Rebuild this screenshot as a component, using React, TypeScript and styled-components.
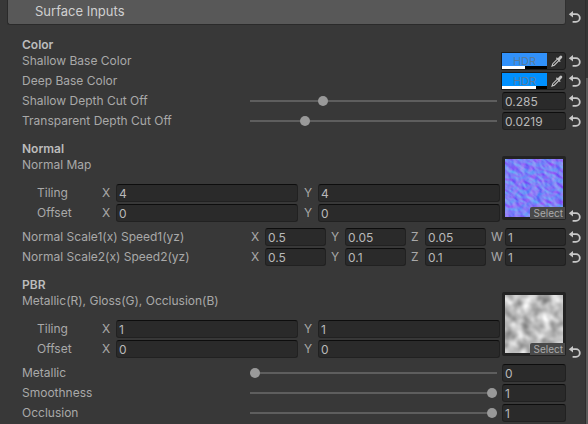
import React, { useId } from "react";
import styled, { createGlobalStyle } from "styled-components";

const GlobalStyle = createGlobalStyle`
  * { box-sizing: border-box; }
  body {
    margin: 0;
    background: #383838;
    color: #a9a9a9;
    font: 400 12px/16px Inter, "Liberation Sans", sans-serif;
    overflow: hidden;
  }
  button, input { font: inherit; color: inherit; margin: 0; }
`;

const Inspector = styled.main`
  display: flex;
  min-height: 100vh;
  background: #383838;
`;

const Content = styled.div`
  flex: 1;
  min-width: 0;
  padding: 0 2px 2px 7px;
`;

const ScrollTrack = styled.div`
  width: 3px;
  border-left: 1px solid #2e2e2e;
  background: linear-gradient(#353535 78px, #5a5a5a 78px);
`;

const HeaderRow = styled.header`
  display: flex;
  align-items: flex-end;
`;

const Foldout = styled.button`
  flex: 1;
  height: 25px;
  padding: 0 27px 2px;
  border: 1px solid #2a2a2a;
  border-top: 0;
  border-right-color: #303030;
  border-radius: 0 0 3px 3px;
  background: #585858;
  color: #d0d0d0;
  font-size: 13px;
  text-align: left;
`;

const Section = styled.section`
  padding: 11px 0 0 15px;
  & + & { padding-top: 10px; }
`;

const Heading = styled.h2`
  margin: 0;
  height: 16px;
  padding-top: 1px;
  font-size: 12px;
  line-height: 16px;
  font-weight: 600;
  color: #bcbcbc;
`;

const Rows = styled.div<{ $spaced?: boolean }>`
  display: grid;
  gap: 2px;
  margin-top: ${(p) => (p.$spaced ? 6 : 0)}px;
`;

const Row = styled.div`
  display: grid;
  grid-template-columns: 228px minmax(0, 1fr) 17px;
  height: 18px;
  align-items: center;
`;

const Label = styled.label`
  white-space: nowrap;
  line-height: 18px;
`;

const Controls = styled.div`
  display: flex;
  justify-content: flex-end;
  align-items: center;
  gap: 5px;
`;

const TextField = styled.input`
  flex: 1;
  min-width: 0;
  width: 100%;
  height: 18px;
  padding: 0 2px;
  border: 1px solid #212121;
  border-top-color: #0d0d0d;
  border-radius: 3px;
  background: #2a2a2a;
  color: #b9b9b9;
  outline: none;
`;

const ValueField = styled(TextField)`
  flex: 0 0 64px;
`;

const Slider = styled.input`
  appearance: none;
  flex: 1;
  min-width: 0;
  height: 10px;
  background: linear-gradient(#5e5e5e, #5e5e5e) center / 100% 2px no-repeat;
  &::-webkit-slider-thumb {
    appearance: none;
    width: 10px;
    height: 10px;
    border-radius: 50%;
    background: #999;
  }
`;

const ResetButton = styled.button`
  display: flex;
  justify-content: center;
  align-items: center;
  width: 17px;
  height: 16px;
  padding: 0;
  border: 0;
  background: none;
  color: #c8c8c8;
`;

const ColorField = styled.div`
  display: flex;
  width: 65px;
  height: 18px;
  border: 1px solid #1c1c1c;
  border-radius: 0 3px 3px 0;
  background: #2c2c2c;
`;

const Swatch = styled.button<{ $color: string; $alpha: number }>`
  width: 45px;
  height: 16px;
  padding: 0;
  border: 0;
  background:
    linear-gradient(90deg, #fff ${(p) => p.$alpha}%, #000 ${(p) => p.$alpha}%) bottom / 100% 3px no-repeat,
    ${(p) => p.$color};
  color: #567c9e;
  font-size: 11px;
  line-height: 16px;
`;

const PickerButton = styled.button`
  display: flex;
  flex: 1;
  align-items: center;
  justify-content: center;
  padding: 0 0 0 2px;
  border: 0;
  background: none;
  color: #c4c4c4;
`;

const Vector = styled.div<{ $count: number }>`
  display: grid;
  flex: 1;
  grid-template-columns: repeat(${(p) => p.$count}, minmax(0, 1fr));
  gap: ${(p) => (p.$count === 2 ? 5 : 4)}px;
`;

const Axis = styled.label`
  display: flex;
  align-items: center;
`;

const AxisName = styled.span`
  width: 15px;
  padding-left: 1px;
  flex: none;
`;

const TextureRow = styled.div`
  display: grid;
  grid-template-columns: minmax(0, 1fr) 64px 17px;
`;

const TextureSettings = styled.div`
  display: grid;
  gap: 2px;
  padding-right: 2px;
`;

const TextureName = styled.div`
  height: 18px;
  line-height: 18px;
  margin-bottom: 8px;
`;

const TextureVector = styled.div`
  display: grid;
  grid-template-columns: 64px minmax(0, 1fr);
  padding-left: 15px;
  height: 18px;
  align-items: center;
`;

const Thumbnail = styled.div`
  position: relative;
  height: 64px;
  padding: 3px;
  border-radius: 2px;
  background: #232323;
  svg { display: block; width: 100%; }
`;

const SelectButton = styled.button`
  position: absolute;
  right: 1px;
  bottom: 1px;
  height: 12px;
  padding: 0 2px 0 4px;
  border: 0;
  border-radius: 2px 0 0 0;
  background: #494949;
  color: #a9a9a9;
  font-size: 10px;
  line-height: 12px;
`;

const TextureReset = styled.div`
  align-self: end;
  height: 14px;
`;

function Reset({ label }: { label: string }) {
  return (
    <ResetButton aria-label={`Reset ${label}`}>
      <svg width="13" height="12" viewBox="0 0 13 12" fill="none">
        <path d="M3 3.2H8a3.8 3.8 0 0 1 0 7.6H4.6" stroke="currentColor" strokeWidth="1.8" />
        <path d="M.8 3.2 5 0v6.4z" fill="currentColor" />
      </svg>
    </ResetButton>
  );
}

function Dropper() {
  return (
    <svg width="12" height="12" viewBox="0 0 12 12" fill="none">
      <path d="M6.6 3.9 1.8 8.7 1 11l2.3-.8 4.8-4.8" stroke="currentColor" strokeWidth="1.1" />
      <path d="M5.4 2.8 9.2 6.6" stroke="currentColor" strokeWidth="1.3" />
      <path d="M7.8 4.2 9.9 2.1" stroke="currentColor" strokeWidth="2.8" strokeLinecap="round" />
    </svg>
  );
}

function ColorRow({ label, color, alpha }: { label: string; color: string; alpha: number }) {
  const id = useId();
  return (
    <Row>
      <Label htmlFor={id}>{label}</Label>
      <Controls>
        <ColorField>
          <Swatch id={id} $color={color} $alpha={alpha}>HDR</Swatch>
          <PickerButton aria-label={`Pick ${label}`}><Dropper /></PickerButton>
        </ColorField>
      </Controls>
      <Reset label={label} />
    </Row>
  );
}

function SliderRow({ label, value, position, reset }: { label: string; value: string; position: number; reset?: boolean }) {
  const id = useId();
  return (
    <Row>
      <Label htmlFor={id}>{label}</Label>
      <Controls>
        <Slider id={id} type="range" min={0} max={1} step={0.001} defaultValue={position} />
        <ValueField aria-label={`${label} value`} defaultValue={value} />
      </Controls>
      {reset && <Reset label={label} />}
    </Row>
  );
}

function VectorInput({ name, values }: { name: string; values: string[] }) {
  return (
    <Vector $count={values.length} role="group" aria-label={name}>
      {values.map((value, i) => (
        <Axis key={i}>
          <AxisName>{"XYZW"[i]}</AxisName>
          <TextField defaultValue={value} />
        </Axis>
      ))}
    </Vector>
  );
}

function VectorRow({ label, values }: { label: string; values: string[] }) {
  return (
    <Row>
      <Label as="span">{label}</Label>
      <VectorInput name={label} values={values} />
      <Reset label={label} />
    </Row>
  );
}

function TextureProperty({ label, tiling, children }: { label: string; tiling: string; children: React.ReactNode }) {
  return (
    <TextureRow>
      <TextureSettings>
        <TextureName>{label}</TextureName>
        <TextureVector>
          <span>Tiling</span>
          <VectorInput name="Tiling" values={[tiling, tiling]} />
        </TextureVector>
        <TextureVector>
          <span>Offset</span>
          <VectorInput name="Offset" values={["0", "0"]} />
        </TextureVector>
      </TextureSettings>
      <Thumbnail>
        {children}
        <SelectButton>Select</SelectButton>
      </Thumbnail>
      <TextureReset><Reset label={label} /></TextureReset>
    </TextureRow>
  );
}

function NormalTexture() {
  return (
    <svg width="58" height="58" viewBox="0 0 58 58">
      <defs>
        <filter id="normal" x="0" y="0" width="1" height="1" colorInterpolationFilters="sRGB">
          <feTurbulence type="fractalNoise" baseFrequency="0.13 0.2" numOctaves="4" seed="8" />
          <feColorMatrix values="0 0 0 0 0  0 0 0 0 0  0 0 0 0 0  1 0 0 0 0" result="height" />
          <feDiffuseLighting in="height" surfaceScale="1" lightingColor="#ff0000" result="red">
            <feDistantLight azimuth="0" elevation="30" />
          </feDiffuseLighting>
          <feDiffuseLighting in="height" surfaceScale="1" lightingColor="#00ff00" result="green">
            <feDistantLight azimuth="270" elevation="32" />
          </feDiffuseLighting>
          <feComposite in="red" in2="green" operator="arithmetic" k2="1" k3="1" />
          <feColorMatrix values="0.75 0 0 0 0.12  0 0.75 0 0 0.11  0 0 0 0 0.97  0 0 0 0 1" />
        </filter>
      </defs>
      <g transform="rotate(35 29 29)">
        <rect x="-20" y="-20" width="98" height="98" filter="url(#normal)" />
      </g>
    </svg>
  );
}

function NoiseTexture() {
  return (
    <svg width="58" height="58" viewBox="0 0 58 58">
      <defs>
        <filter id="noise" x="0" y="0" width="1" height="1" colorInterpolationFilters="sRGB">
          <feTurbulence type="fractalNoise" baseFrequency="0.11" numOctaves="2" seed="12" />
          <feColorMatrix values="1 0 0 0 0  1 0 0 0 0  1 0 0 0 0  0 0 0 0 1" />
          <feGaussianBlur stdDeviation="1" />
          <feColorMatrix values="0.75 0 0 0 0.37  0.75 0 0 0 0.37  0.75 0 0 0 0.37  0 0 0 0 1" />
        </filter>
      </defs>
      <rect width="58" height="58" filter="url(#noise)" />
    </svg>
  );
}

export default function App() {
  return (
    <>
      <GlobalStyle />
      <Inspector>
        <Content>
          <HeaderRow>
            <Foldout>Surface Inputs</Foldout>
            <Reset label="Surface Inputs" />
          </HeaderRow>

          <Section>
            <Heading>Color</Heading>
            <Rows>
              <ColorRow label="Shallow Base Color" color="#3191fa" alpha={51} />
              <ColorRow label="Deep Base Color" color="#0090ff" alpha={75} />
              <SliderRow label="Shallow Depth Cut Off" value="0.285" position={0.287} reset />
              <SliderRow label="Transparent Depth Cut Off" value="0.0219" position={0.211} reset />
            </Rows>
          </Section>

          <Section>
            <Heading>Normal</Heading>
            <TextureProperty label="Normal Map" tiling="4"><NormalTexture /></TextureProperty>
            <Rows $spaced>
              <VectorRow label="Normal Scale1(x) Speed1(yz)" values={["0.5", "0.05", "0.05", "1"]} />
              <VectorRow label="Normal Scale2(x) Speed2(yz)" values={["0.5", "0.1", "0.1", "1"]} />
            </Rows>
          </Section>

          <Section>
            <Heading>PBR</Heading>
            <TextureProperty label="Metallic(R), Gloss(G), Occlusion(B)" tiling="1"><NoiseTexture /></TextureProperty>
            <Rows $spaced>
              <SliderRow label="Metallic" value="0" position={0} />
              <SliderRow label="Smoothness" value="1" position={1} />
              <SliderRow label="Occlusion" value="1" position={1} />
            </Rows>
          </Section>
        </Content>
        <ScrollTrack />
      </Inspector>
    </>
  );
}
